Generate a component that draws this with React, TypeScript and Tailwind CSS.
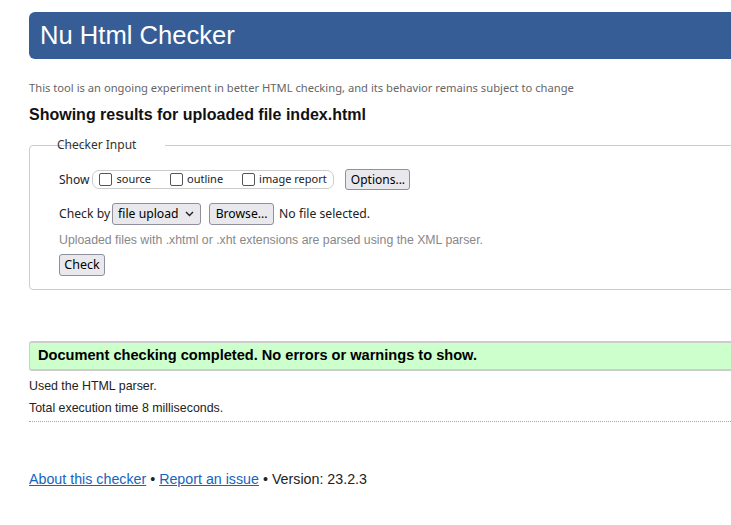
export default function App() {
  const ui = { fontFamily: '"Noto Sans", "Open Sans", sans-serif' };
  const arial = { fontFamily: '"Liberation Sans", Arial, sans-serif' };

  return (
    <div className="w-[731px] h-[525px] overflow-hidden bg-white text-[#222]" style={arial}>
      <div className="ml-[29px] w-[760px]">
        {/* Header */}
        <div className="mt-[12px] h-[47px] rounded-l-[6px] bg-[#365d95] pl-[11px] flex items-center">
          <h1 className="text-[25.6px] leading-none text-white">Nu Html Checker</h1>
        </div>

        <p className="mt-[21px] text-[11.2px] leading-[16px] text-[#666]" style={ui}>
          This tool is an ongoing experiment in better HTML checking, and its behavior remains subject to change
        </p>

        <h2 className="mt-[9px] text-[16px] font-bold leading-[20px] text-[#111]">
          Showing results for uploaded file index.html
        </h2>

        {/* Checker input */}
        <fieldset className="mt-[13px] rounded-l-[4px] border border-[#ccc] pl-[29px] pr-0 pb-[13px] pt-[17px]">
          <legend className="ml-[27px] -translate-x-[29px] px-0 text-[12px] leading-[14px] text-[#333]" style={ui}>
            Checker Input
          </legend>

          <div className="flex items-center text-[12px]">
            <span className="text-[12px]" style={ui}>Show</span>
            <div
              className="ml-[3px] flex h-[19px] w-[242px] items-center rounded-[7px] border border-[#ccc] pl-[6px] text-[11px]"
              style={ui}
            >
              <label className="flex items-center">
                <span className="h-[13px] w-[13px] rounded-[2px] border border-[#555] bg-white" />
                <span className="ml-[4px]">source</span>
              </label>
              <label className="ml-[19px] flex items-center">
                <span className="h-[13px] w-[13px] rounded-[2px] border border-[#555] bg-white" />
                <span className="ml-[4px]">outline</span>
              </label>
              <label className="ml-[19px] flex items-center">
                <span className="h-[13px] w-[13px] rounded-[2px] border border-[#555] bg-white" />
                <span className="ml-[4px]">image report</span>
              </label>
            </div>
            <button
              className="ml-[11px] h-[21px] w-[65px] rounded-[3px] border border-[#8f8f9d] bg-[#e9e9ed] text-[12px] text-black"
              style={ui}
            >
              Options...
            </button>
          </div>

          <div className="mt-[13px] flex items-center text-[12.2px]" style={ui}>
            <span>Check by</span>
            <div className="ml-[2px] flex h-[22px] w-[89px] items-center justify-between rounded-[3px] border border-[#8f8f9d] bg-[#e9e9ed] pl-[5px] pr-[6px] text-black">
              <span>file upload</span>
              <svg width="9" height="6" viewBox="0 0 9 6" fill="none">
                <path d="M1 1l3.5 3.5L8 1" stroke="#222" strokeWidth="1.4" />
              </svg>
            </div>
            <button className="ml-[8px] h-[22px] w-[65px] rounded-[3px] border border-[#8f8f9d] bg-[#e9e9ed] text-black">
              Browse...
            </button>
            <span className="ml-[5px]">No file selected.</span>
          </div>

          <p className="mt-[7px] text-[12.3px] leading-[16px] text-[#888]">
            Uploaded files with .xhtml or .xht extensions are parsed using the XML parser.
          </p>

          <button
            className="mt-[6px] h-[22px] w-[46px] rounded-[3px] border border-[#8f8f9d] bg-[#e9e9ed] text-[12.5px] text-black"
            style={ui}
          >
            Check
          </button>
        </fieldset>

        {/* Result */}
        <div className="mt-[51px] flex h-[30px] items-center rounded-l-[3px] border-y-2 border-l border-[#ccc] bg-[#ccffcc] pl-[8px]">
          <p className="text-[14.6px] font-bold text-black">Document checking completed. No errors or warnings to show.</p>
        </div>

        <p className="mt-[7px] text-[12.4px] leading-[16px]">Used the HTML parser.</p>
        <p className="mt-[6px] text-[12.4px] leading-[16px]">Total execution time 8 milliseconds.</p>
        <div className="mt-[5px] border-t border-dotted border-[#aaa]" />

        <p className="mt-[48px] text-[14.25px] leading-[18px] text-[#222]">
          <a href="#" className="text-[#1565c0] underline">About this checker</a>
          {" • "}
          <a href="#" className="text-[#1565c0] underline">Report an issue</a>
          {" • Version: 23.2.3"}
        </p>
      </div>
    </div>
  );
}
